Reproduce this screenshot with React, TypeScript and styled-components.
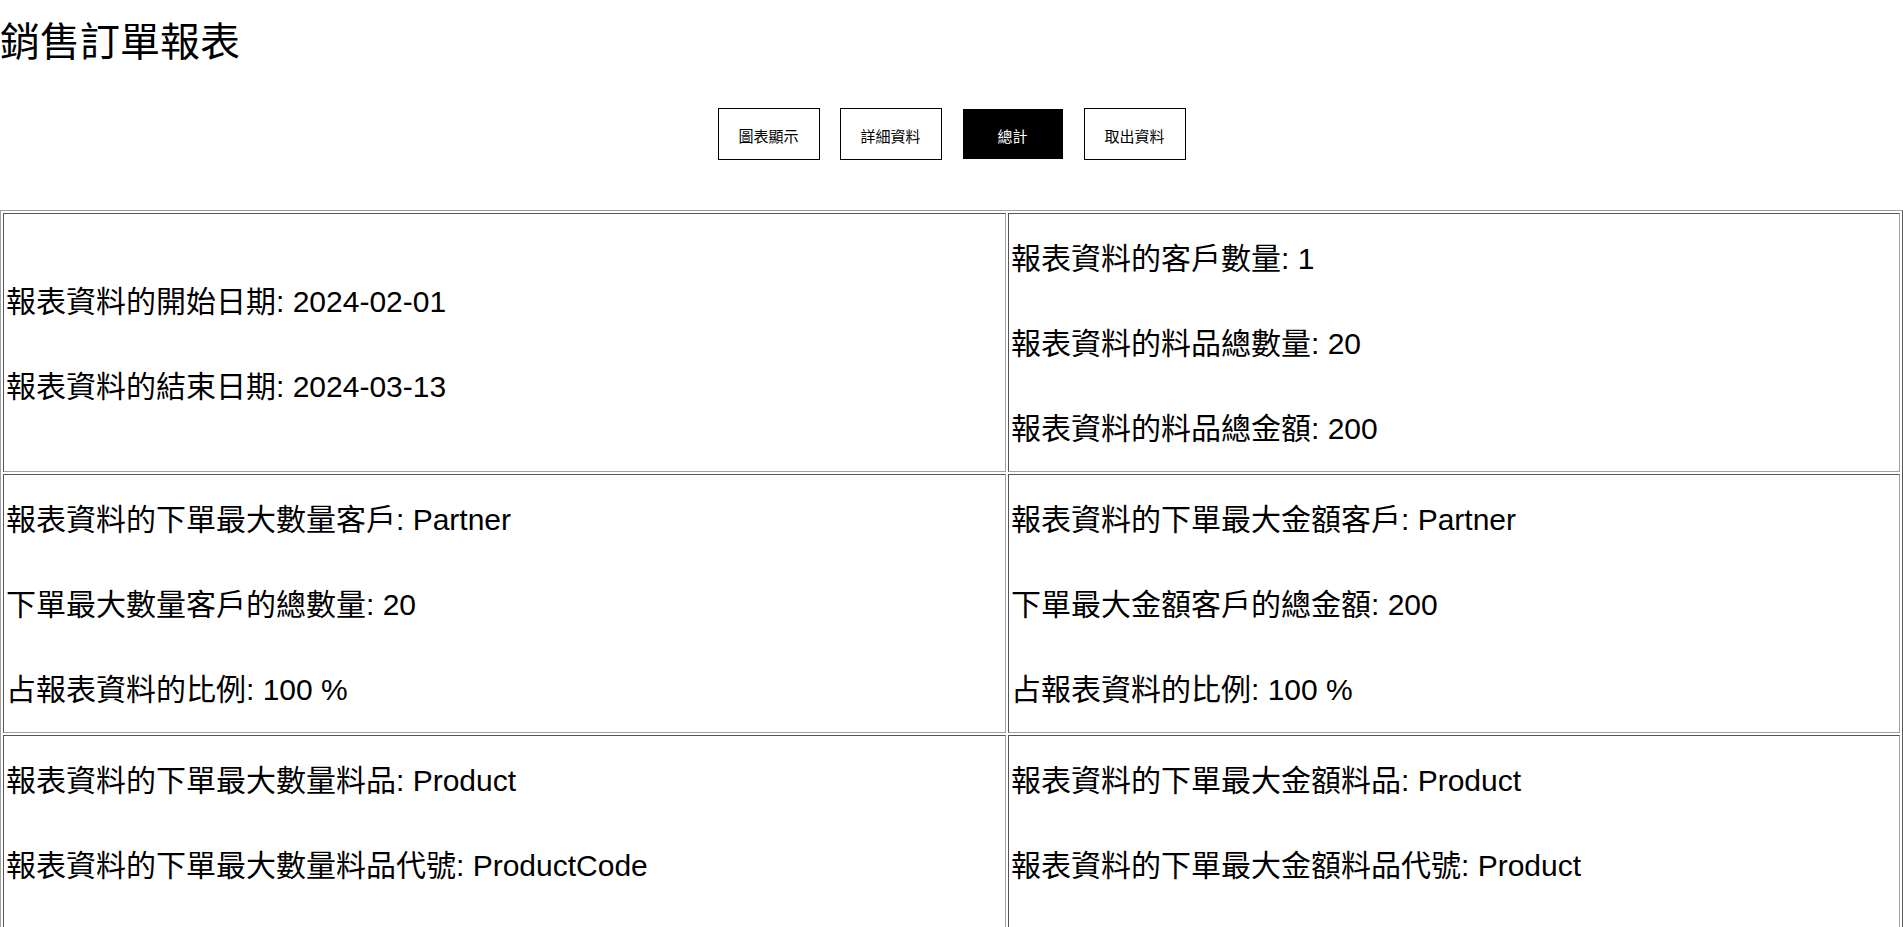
import React from "react";
import styled, { createGlobalStyle } from "styled-components";

const GlobalStyle = createGlobalStyle`
  html, body {
    margin: 0;
    padding: 0;
    background: #ffffff;
  }
  body {
    font-family: "Liberation Sans", "Noto Sans CJK TC", sans-serif;
    color: #000000;
  }
`;

const Page = styled.div`
  display: flex;
  flex-direction: column;
`;

const Title = styled.h1`
  margin: 0;
  padding-top: 19px;
  font-family: "Noto Sans CJK TC", serif;
  font-size: 40px;
  font-weight: 400;
  line-height: 40px;
`;

const Toolbar = styled.nav`
  display: flex;
  justify-content: center;
  gap: 20px;
  padding-top: 49px;
`;

const TabButton = styled.button<{ $active?: boolean }>`
  box-sizing: border-box;
  width: 102px;
  height: 52px;
  padding: 3px 0 0;
  border: 1px solid ${(p) => (p.$active ? "#ffffff" : "#000000")};
  background: ${(p) => (p.$active ? "#000000" : "#ffffff")};
  color: ${(p) => (p.$active ? "#ffffff" : "#000000")};
  font-family: "Noto Sans CJK TC", sans-serif;
  font-size: 15px;
  line-height: 20px;
  cursor: pointer;
`;

const ReportTable = styled.table`
  margin-top: 50px;
  width: 100%;
  table-layout: fixed;
  border-collapse: separate;
  border-spacing: 2px;
  border-style: solid;
  border-width: 1px;
  border-color: #a0a0a0 #555555 #555555 #a0a0a0;
`;

const Cell = styled.td<{ $wide?: boolean }>`
  box-sizing: border-box;
  width: ${(p) => (p.$wide ? "1003px" : "auto")};
  padding: 2px 2px 0;
  vertical-align: middle;
  border-style: solid;
  border-width: 1px;
  border-color: #555555 #a0a0a0 #a0a0a0 #555555;
`;

const Line = styled.p`
  margin: 0;
  font-size: 30px;
  line-height: 85px;
  white-space: nowrap;
`;

type Row = [string[], string[]];

const rows: Row[] = [
  [
    ["報表資料的開始日期: 2024-02-01", "報表資料的結束日期: 2024-03-13"],
    ["報表資料的客戶數量: 1", "報表資料的料品總數量: 20", "報表資料的料品總金額: 200"],
  ],
  [
    ["報表資料的下單最大數量客戶: Partner", "下單最大數量客戶的總數量: 20", "占報表資料的比例: 100 %"],
    ["報表資料的下單最大金額客戶: Partner", "下單最大金額客戶的總金額: 200", "占報表資料的比例: 100 %"],
  ],
  [
    ["報表資料的下單最大數量料品: Product", "報表資料的下單最大數量料品代號: ProductCode", "下單最大數量料品的總數量: 20"],
    ["報表資料的下單最大金額料品: Product", "報表資料的下單最大金額料品代號: Product", "下單最大金額料品的總金額: 200"],
  ],
];

const tabs = ["圖表顯示", "詳細資料", "總計", "取出資料"];

export default function App() {
  return (
    <Page>
      <GlobalStyle />
      <Title>銷售訂單報表</Title>
      <Toolbar>
        {tabs.map((t) => (
          <TabButton key={t} $active={t === "總計"}>
            {t}
          </TabButton>
        ))}
      </Toolbar>
      <ReportTable>
        <tbody>
          {rows.map((row, i) => (
            <tr key={i}>
              <Cell $wide>
                {row[0].map((l) => (
                  <Line key={l}>{l}</Line>
                ))}
              </Cell>
              <Cell>
                {row[1].map((l) => (
                  <Line key={l}>{l}</Line>
                ))}
              </Cell>
            </tr>
          ))}
        </tbody>
      </ReportTable>
    </Page>
  );
}
